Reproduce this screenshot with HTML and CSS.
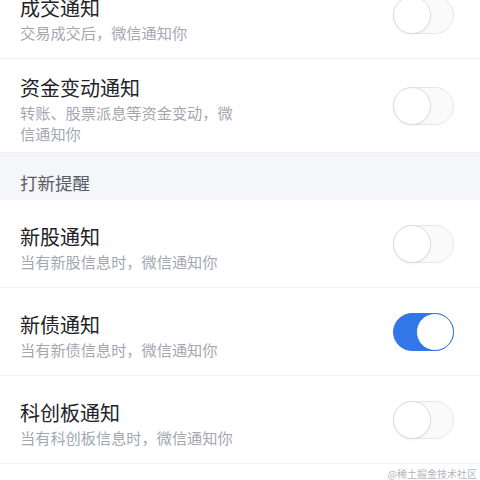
FILE: index.html
```html
<!DOCTYPE html>
<html lang="zh-CN">
<head>
<meta charset="utf-8">
<title>通知设置</title>
<link rel="stylesheet" href="styles.css">
</head>
<body>
<div class="page">
  <div class="list">
    <div class="row">
      <div class="text">
        <div class="title">成交通知</div>
        <div class="sub">交易成交后，微信通知你</div>
      </div>
      <div class="switch"></div>
    </div>
    <div class="row">
      <div class="text">
        <div class="title">资金变动通知</div>
        <div class="sub">转账、股票派息等资金变动，微信通知你</div>
      </div>
      <div class="switch"></div>
    </div>
    <div class="section">打新提醒</div>
    <div class="row">
      <div class="text">
        <div class="title">新股通知</div>
        <div class="sub">当有新股信息时，微信通知你</div>
      </div>
      <div class="switch"></div>
    </div>
    <div class="row">
      <div class="text">
        <div class="title">新债通知</div>
        <div class="sub">当有新债信息时，微信通知你</div>
      </div>
      <div class="switch on"></div>
    </div>
    <div class="row">
      <div class="text">
        <div class="title">科创板通知</div>
        <div class="sub">当有科创板信息时，微信通知你</div>
      </div>
      <div class="switch"></div>
    </div>
  </div>
  <div class="watermark">@稀土掘金技术社区</div>
</div>
</body>
</html>
```
FILE: styles.css
```css
html, body {
  margin: 0;
  padding: 0;
  background: #ffffff;
}
body {
  font-family: "Noto Sans CJK SC", "Noto Sans", sans-serif;
  width: 480px;
  height: 480px;
  overflow: hidden;
}
.page {
  display: flex;
  flex-direction: column;
}
.list {
  margin-top: -29px;
  display: flex;
  flex-direction: column;
}
.row {
  box-sizing: border-box;
  min-height: 88px;
  padding: 9px 26px 8px 20px;
  display: flex;
  align-items: center;
  justify-content: space-between;
  border-bottom: 1px solid #f1f1f3;
}
.text {
  max-width: 222px;
  padding-top: 7px;
}
.title {
  font-size: 20px;
  line-height: 26px;
  color: #222326;
}
.sub {
  margin-top: 1px;
  font-size: 15.2px;
  line-height: 21px;
  color: #a3a7b0;
}
.section {
  box-sizing: border-box;
  height: 47px;
  padding: 19px 20px 0;
  font-size: 17.5px;
  line-height: 22px;
  color: #585c66;
  background: #f5f6f9;
}
.switch {
  position: relative;
  box-sizing: border-box;
  width: 61px;
  height: 38px;
  border-radius: 19px;
  border: 1px solid #e6e6e8;
  background: #fafafa;
  flex-shrink: 0;
}
.switch::after {
  content: "";
  position: absolute;
  top: -1px;
  left: -1px;
  box-sizing: border-box;
  width: 38px;
  height: 38px;
  border-radius: 50%;
  background: #ffffff;
  border: 1px solid #dedee0;
  box-shadow: 0 1px 2px rgba(0, 0, 0, 0.06);
}
.switch.on {
  background: #3376e9;
  border-color: #3376e9;
}
.switch.on::after {
  left: auto;
  right: -1px;
  border-color: #3a78e0;
  box-shadow: none;
}
.watermark {
  padding: 3px 3px 0 0;
  text-align: right;
  font-size: 10px;
  line-height: 14px;
  color: #b4b6ba;
}
```
